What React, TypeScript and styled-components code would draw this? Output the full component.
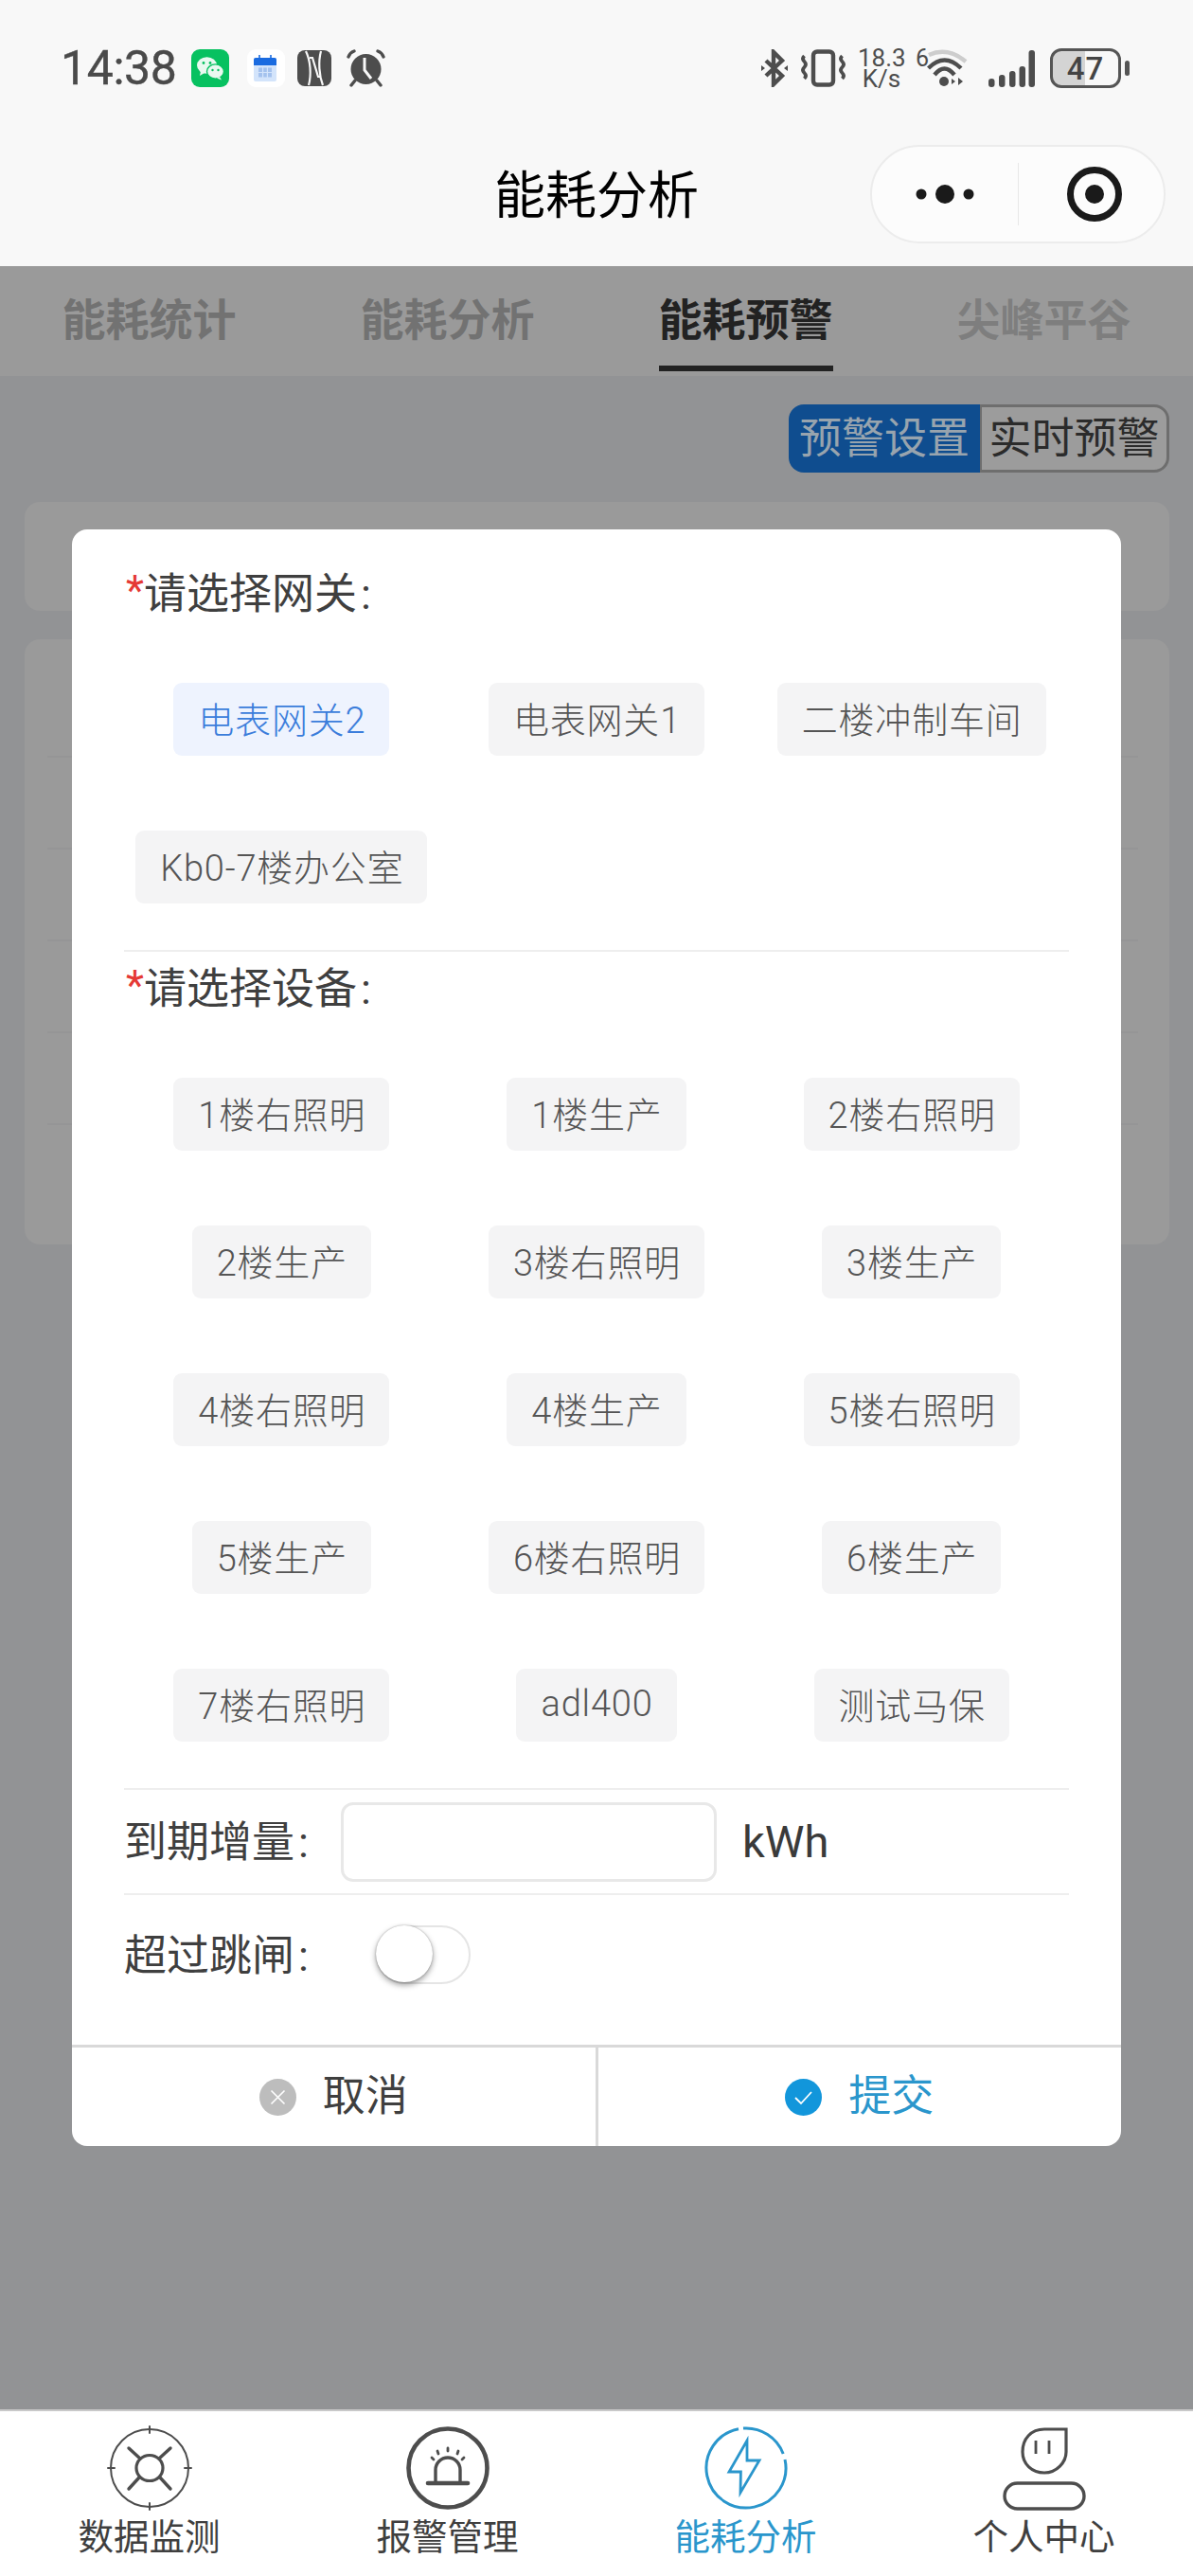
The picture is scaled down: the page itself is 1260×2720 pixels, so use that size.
import React from 'react';
import styled, { createGlobalStyle } from 'styled-components';

const GlobalStyle = createGlobalStyle`
  html, body {
    margin: 0;
    padding: 0;
    background: #929395;
    font-family: Roboto, "Noto Sans CJK SC", sans-serif;
  }
  * { box-sizing: border-box; }
`;

const Page = styled.div`
  position: relative;
  width: 1260px;
  height: 2720px;
  display: flex;
  flex-direction: column;
  overflow: hidden;
`;

// Header
const Header = styled.header`
  background: #f8f8f8;
  height: 281px;
  flex: none;
`;

const StatusBar = styled.div`
  height: 144px;
  display: flex;
  align-items: center;
  justify-content: space-between;
  padding: 0 68px 0 64px;
  color: #4d4d4d;
`;

const StatusGroup = styled.div`
  display: flex;
  align-items: center;
`;

const Clock = styled.span`
  font-size: 50px;
  line-height: 50px;
  letter-spacing: -0.4px;
  color: #4a4a4a;
  -webkit-text-stroke: 0.4px #4a4a4a;
`;

const StatusIcon = styled.svg<{ $gap?: number }>`
  display: block;
  flex: none;
  margin-left: ${props => props.$gap || 0}px;
`;

const Speed = styled.div`
  margin-left: 13px;
  width: 50px;
  font-size: 26px;
  line-height: 22px;
  text-align: center;
  color: #4d4d4d;
`;

const WifiGen = styled.span`
  margin: 0 0 20px 11px;
  font-size: 25px;
  line-height: 22px;
  width: 12px;
  color: #4d4d4d;
`;

const Battery = styled.div`
  position: relative;
  margin-left: 16px;
  width: 75px;
  height: 42px;
  border: 3px solid #555;
  border-radius: 12px;
  background: linear-gradient(90deg, #d4d4d4 0 50%, transparent 50%);
  display: flex;
  align-items: center;
  justify-content: center;
  font-size: 33px;
  font-weight: 500;
  letter-spacing: 1px;
  color: #444;

  &::after {
    content: '';
    position: absolute;
    right: -12px;
    top: 10px;
    width: 5px;
    height: 16px;
    border-radius: 3px;
    background: #555;
  }
`;

const NavBar = styled.div`
  height: 137px;
  padding: 0 29px 15px;
  display: grid;
  grid-template-columns: 1fr auto 1fr;
  align-items: center;
`;

const NavTitle = styled.div`
  grid-column: 2;
  padding-top: 6px;
  font-size: 54px;
  line-height: 64px;
  color: #000;
`;

const Capsule = styled.div`
  justify-self: end;
  width: 312px;
  height: 104px;
  border: 2px solid #ececec;
  border-radius: 52px;
  background: #fcfcfc;
  display: flex;
  align-items: center;
`;

const CapsuleMenu = styled.div`
  flex: 0 0 155px;
  display: flex;
  align-items: center;
  justify-content: center;
  height: 66px;
  border-right: 1px solid #e8e8e8;
`;

const CapsuleClose = styled.div`
  flex: 1;
  padding-left: 7px;
  display: flex;
  align-items: center;
  justify-content: center;
  height: 66px;
`;

// Tabs
const TabBar = styled.nav`
  flex: none;
  height: 116px;
  background: #9a9a9a;
  display: grid;
  grid-template-columns: repeat(4, 1fr);
  justify-items: center;
`;

const Tab = styled.div<{ $active?: boolean; $faint?: boolean }>`
  height: 111px;
  padding-top: 27px;
  font-size: 46px;
  line-height: 60px;
  font-weight: 700;
  color: ${props => (props.$active ? '#222' : props.$faint ? '#7e7e7e' : '#727272')};
  border-bottom: 6px solid ${props => (props.$active ? '#222' : 'transparent')};
`;

// Dimmed page behind the popup
const Main = styled.main`
  flex: 1;
  padding: 30px 25px 0 26px;
  background: #929395;
`;

const SegmentRow = styled.div`
  display: flex;
  justify-content: flex-end;
`;

const Segment = styled.div<{ $active?: boolean }>`
  height: 72px;
  padding-bottom: 7px;
  display: flex;
  align-items: center;
  justify-content: center;
  font-size: 45px;
  ${props =>
    props.$active
      ? `
    width: 202px;
    background: #0f4d8f;
    color: #98a4ae;
    border-radius: 16px 0 0 16px;
  `
      : `
    width: 200px;
    background: #9c9c9c;
    color: #2b2b2b;
    border: 3px solid #6e6e6e;
    border-left-width: 2px;
    border-radius: 0 16px 16px 0;
  `}
`;

const GhostCard = styled.div`
  background: #9a9a9a;
  border-radius: 16px;
  height: 115px;
  margin-top: 31px;
`;

const GhostList = styled.div`
  background: #9a9a9a;
  border-radius: 16px;
  margin-top: 30px;
  padding: 0 33px 0 24px;
  height: 639px;
  display: flex;
  flex-direction: column;
`;

const GhostRow = styled.div<{ $first?: boolean }>`
  height: ${props => (props.$first ? 125 : 97)}px;
  flex: none;
  border-bottom: 2px solid #959596;
`;

// Popup
const Modal = styled.section`
  position: absolute;
  left: 76px;
  top: 559px;
  width: 1108px;
  height: 1707px;
  background: #fff;
  border-radius: 16px;
  overflow: hidden;
  display: flex;
  flex-direction: column;
`;

const ModalBody = styled.div`
  flex: 1;
  padding: 35px 55px 0;
`;

const FieldLabel = styled.div<{ $next?: boolean }>`
  margin-top: ${props => (props.$next ? 6 : 0)}px;
  height: 60px;
  padding-top: 7px;
  font-size: 45px;
  line-height: 53px;
  color: #3f3f3f;
  display: flex;
  align-items: center;
`;

const Required = styled.span`
  width: 21px;
  padding-left: 2px;
  margin-bottom: 7px;
  color: #e53935;
  font-size: 44px;
`;

const Colon = styled.span`
  margin-left: 4px;
`;

const ChipGrid = styled.div`
  margin-top: 67px;
  padding-bottom: 49px;
  display: grid;
  grid-template-columns: repeat(3, 1fr);
  justify-items: center;
  row-gap: 79px;
  border-bottom: 2px solid #eeeeee;
`;

const Chip = styled.div<{ $selected?: boolean }>`
  height: 77px;
  padding: 0 25px 4px 26px;
  border-radius: 9px;
  display: flex;
  align-items: center;
  font-size: 38px;
  font-weight: 300;
  letter-spacing: 0.8px;
  white-space: nowrap;
  background: ${props => (props.$selected ? '#eef3fe' : '#f4f4f5')};
  color: ${props => (props.$selected ? '#3b7ddb' : '#555')};
`;

const FormRow = styled.div<{ $height: number; $divider?: boolean }>`
  height: ${props => props.$height}px;
  display: flex;
  align-items: center;
  font-size: 45px;
  color: #3f3f3f;
  border-bottom: ${props => (props.$divider ? '2px solid #eeeeee' : 'none')};
`;

const RowLabel = styled.span<{ $width: number }>`
  width: ${props => props.$width}px;
  padding-bottom: 6px;
  flex: none;
`;

const AmountInput = styled.input`
  width: 397px;
  height: 84px;
  border: 3px solid #e8e8e8;
  border-radius: 13px;
  background: #fff;
  outline: none;
  margin-right: 27px;
`;

const Unit = styled.span`
  font-size: 47px;
  color: #3a3a3a;
`;

const Toggle = styled.div`
  position: relative;
  width: 100px;
  height: 62px;
  border: 2px solid #e5e5e5;
  border-radius: 31px;
  background: #fff;
`;

const ToggleThumb = styled.span`
  position: absolute;
  left: -2px;
  top: -2px;
  width: 60px;
  height: 60px;
  border-radius: 50%;
  background: #fff;
  box-shadow: 0 3px 6px rgba(0, 0, 0, 0.38), 0 0 2px rgba(0, 0, 0, 0.3);
`;

const ModalFooter = styled.div`
  flex: none;
  height: 107px;
  border-top: 3px solid #d9d9d9;
  display: flex;
`;

const FooterButton = styled.div<{ $primary?: boolean }>`
  flex: 1;
  display: flex;
  align-items: center;
  justify-content: center;
  gap: 28px;
  font-size: 45px;
  color: ${props => (props.$primary ? '#2a96cc' : '#3f3f3f')};

  & + & {
    border-left: 3px solid #d9d9d9;
  }
`;

const FooterText = styled.span`
  padding-bottom: 9px;
`;

// Bottom tab bar
const BottomBar = styled.footer`
  flex: none;
  height: 176px;
  background: #fff;
  border-top: 2px solid #c9c9c9;
  display: grid;
  grid-template-columns: repeat(4, 1fr);
`;

const BottomItem = styled.div<{ $active?: boolean }>`
  padding-top: 16px;
  display: flex;
  flex-direction: column;
  align-items: center;
  font-size: 37.500px;
  line-height: 58px;
  color: ${props => (props.$active ? '#2a96cc' : '#3f3f3f')};
`;

const BottomIcon = styled.svg`
  display: block;
  width: 88px;
  height: 88px;
  overflow: visible;
  flex: none;
`;

const gateways = ['电表网关2', '电表网关1', '二楼冲制车间', 'Kb0-7楼办公室'];
const devices = [
  '1楼右照明', '1楼生产', '2楼右照明',
  '2楼生产', '3楼右照明', '3楼生产',
  '4楼右照明', '4楼生产', '5楼右照明',
  '5楼生产', '6楼右照明', '6楼生产',
  '7楼右照明', 'adl400', '测试马保',
];

const GRAY = '#4d4d4d';
const BLUE = '#2a96cc';

const StatusLeft = () => (
  <StatusGroup>
    <Clock>14:38</Clock>
    <StatusIcon $gap={15} width="40" height="40" viewBox="0 0 40 40">
      <rect width="40" height="40" rx="9" fill="#07c160" />
      <ellipse cx="16.5" cy="17" rx="10.5" ry="8.8" fill="#e9f9f0" />
      <path d="M10 23l-1 5 5-3z" fill="#e9f9f0" />
      <ellipse cx="25.5" cy="23.5" rx="9" ry="7.6" fill="#e9f9f0" stroke="#07c160" strokeWidth="1.4" />
      <path d="M30 29l2 3.5-5-2z" fill="#e9f9f0" />
      <circle cx="13" cy="14.5" r="1.4" fill="#07c160" />
      <circle cx="20" cy="14.5" r="1.4" fill="#07c160" />
      <circle cx="22.5" cy="22" r="1.2" fill="#07c160" />
      <circle cx="28.5" cy="22" r="1.2" fill="#07c160" />
    </StatusIcon>
    <StatusIcon $gap={19} width="40" height="40" viewBox="0 0 40 40">
      <rect width="40" height="40" rx="9" fill="#fff" />
      <rect x="7" y="9" width="24" height="25" rx="2" fill="#d3e4fb" />
      <path d="M7 11a2 2 0 0 1 2-2h20a2 2 0 0 1 2 2v6H7z" fill="#1a6be0" />
      <path d="M13 6v5M25 6v5" stroke="#1a6be0" strokeWidth="1.6" />
      <path d="M12 19.500h14v10H12z" fill="#a4c2ee" />
      <path d="M16.600 19v11M21.400 19v11M12 24.500h14" stroke="#d3e4fb" strokeWidth="1.2" />
    </StatusIcon>
    <StatusIcon $gap={13} width="36" height="38" viewBox="0 0 36 38">
      <rect width="36" height="38" rx="8" fill={GRAY} />
      <path d="M9 1c5 10 6 25 3 36" fill="none" stroke="#f8f8f8" strokeWidth="2.200" />
      <path d="M13 8h3l6 20h3" fill="none" stroke="#f8f8f8" strokeWidth="2.200" />
      <path d="M27 37c-4-10-5-25-2-36" fill="none" stroke="#f8f8f8" strokeWidth="2.200" />
    </StatusIcon>
    <StatusIcon $gap={16} width="41" height="40" viewBox="0 0 41 40">
      <circle cx="20.500" cy="21" r="16" fill={GRAY} />
      <path d="M19 9v13l7 9" fill="none" stroke="#f8f8f8" strokeWidth="3" />
      <path d="M2 8c1-3 3-5 6-6M39 8c-1-3-3-5-6-6M5 38l4-5M36 38l-4-5" fill="none" stroke={GRAY} strokeWidth="3.4" strokeLinecap="round" />
    </StatusIcon>
  </StatusGroup>
);

const StatusRight = () => (
  <StatusGroup>
    <StatusIcon width="28" height="40" viewBox="0 0 28 40">
      <path d="M5 12l17 16-9 9V3l9 9L5 28" fill="none" stroke={GRAY} strokeWidth="4.4" />
      <path d="M0 17l4 3-4 3zM28 17l-4 3 4 3z" fill={GRAY} />
    </StatusIcon>
    <StatusIcon $gap={14} width="47" height="40" viewBox="0 0 47 40">
      <rect x="13" y="2.500" width="21" height="35" rx="4" fill="none" stroke={GRAY} strokeWidth="4.400" />
      <path d="M3.500 7q-3 3 0 6t0 6 0 6 0 6M43.500 7q-3 3 0 6t0 6 0 6 0 6" fill="none" stroke={GRAY} strokeWidth="3.800" />
    </StatusIcon>
    <Speed>
      18.3
      <br />
      K/s
    </Speed>
    <WifiGen>6</WifiGen>
    <StatusIcon width="44" height="40" viewBox="0 0 44 40">
      <path d="M2 6Q22-3 41 13" fill="none" stroke="#cdcdcd" strokeWidth="4.400" />
      <path d="M1.500 20Q18.500 3 36 20M8 27q10.500-13 21 0" fill="none" stroke={GRAY} strokeWidth="4.400" />
      <circle cx="18" cy="34" r="5" fill={GRAY} />
      <path d="M30 34l-4 3v-6zM33 30l5 4-5 4z" fill={GRAY} />
    </StatusIcon>
    <StatusIcon $gap={21} width="49" height="39" viewBox="0 0 49 39">
      <rect x="0" y="30" width="6.500" height="9" rx="3" fill={GRAY} />
      <rect x="11" y="26" width="6.500" height="13" rx="3" fill={GRAY} />
      <rect x="22" y="22" width="6.500" height="17" rx="3" fill={GRAY} />
      <rect x="32.500" y="17" width="6.500" height="22" rx="3" fill={GRAY} />
      <rect x="42.500" y="0" width="6.500" height="39" rx="3" fill={GRAY} />
    </StatusIcon>
    <Battery>47</Battery>
    <StatusIcon width="8" height="1" viewBox="0 0 8 1" />
  </StatusGroup>
);

const MonitorIcon = () => (
  <BottomIcon viewBox="0 0 88 88" fill="none" stroke="#4d4d4d" strokeLinecap="round">
    <ellipse cx="44" cy="44" rx="41" ry="41" strokeWidth="2" />
    <path d="M44 0v7M44 81v7M0 44h7M81 44h7" strokeWidth="2" />
    <ellipse cx="44" cy="44" rx="14" ry="13.500" strokeWidth="3.200" />
    <path d="M22 23l12 11M66 23L54 34M22 66l11-12M66 66L55 54" strokeWidth="3.400" />
  </BottomIcon>
);

const AlarmIcon = () => (
  <BottomIcon viewBox="0 0 88 88" fill="none" stroke="#4d4d4d" strokeLinecap="round">
    <circle cx="44" cy="44" r="41.500" strokeWidth="4.600" />
    <path d="M31 60V46a13 13 0 0 1 26 0v14" strokeWidth="3.400" />
    <path d="M23 60h42" strokeWidth="4.600" />
    <path d="M44 23v3M33 26l1 3M55 26l-1 3M27 33l2 2M61 33l-2 2" strokeWidth="2.800" />
  </BottomIcon>
);

const EnergyIcon = () => (
  <BottomIcon viewBox="0 0 88 88" fill="none" stroke={BLUE}>
    <path d="M41 2.100A42 42 0 0 1 83.200 29M85 35A42 42 0 1 1 36 2.800" strokeWidth="3" />
    <path d="M45 15L26 48h12.400L38 70l20-34H45z" strokeWidth="2.800" />
  </BottomIcon>
);

const PersonIcon = () => (
  <BottomIcon viewBox="0 0 88 88" fill="none" stroke="#4d4d4d">
    <path d="M67 3H44C30 3 21 13 21 27c0 13 10 22 23 22s23-11 23-22z" strokeWidth="3.200" />
    <path d="M35 15v14M49 15v14" strokeWidth="2.800" />
    <rect x="2" y="60" width="84" height="27" rx="13.500" strokeWidth="3.400" />
  </BottomIcon>
);

export default function App() {
  return (
    <Page>
      <GlobalStyle />
      <Header>
        <StatusBar>
          <StatusLeft />
          <StatusRight />
        </StatusBar>
        <NavBar>
          <NavTitle>能耗分析</NavTitle>
          <Capsule>
            <CapsuleMenu>
              <svg width="62" height="22" viewBox="0 0 62 22" fill="#1a1a1a">
                <circle cx="6" cy="11" r="5.500" />
                <circle cx="31" cy="11" r="10" />
                <circle cx="56" cy="11" r="5.500" />
              </svg>
            </CapsuleMenu>
            <CapsuleClose>
              <svg width="60" height="60" viewBox="0 0 60 60">
                <circle cx="30" cy="30" r="25.500" fill="none" stroke="#1a1a1a" strokeWidth="7" />
                <circle cx="30" cy="30" r="10" fill="#1a1a1a" />
              </svg>
            </CapsuleClose>
          </Capsule>
        </NavBar>
      </Header>

      <TabBar>
        <Tab>能耗统计</Tab>
        <Tab>能耗分析</Tab>
        <Tab $active>能耗预警</Tab>
        <Tab $faint>尖峰平谷</Tab>
      </TabBar>

      <Main>
        <SegmentRow>
          <Segment $active>预警设置</Segment>
          <Segment>实时预警</Segment>
        </SegmentRow>
        <GhostCard />
        <GhostList>
          <GhostRow $first />
          <GhostRow />
          <GhostRow />
          <GhostRow />
          <GhostRow />
        </GhostList>
      </Main>

      <BottomBar>
        <BottomItem>
          <MonitorIcon />
          数据监测
        </BottomItem>
        <BottomItem>
          <AlarmIcon />
          报警管理
        </BottomItem>
        <BottomItem $active>
          <EnergyIcon />
          能耗分析
        </BottomItem>
        <BottomItem>
          <PersonIcon />
          个人中心
        </BottomItem>
      </BottomBar>

      <Modal>
        <ModalBody>
          <FieldLabel>
            <Required>*</Required>请选择网关<Colon>:</Colon>
          </FieldLabel>
          <ChipGrid>
            {gateways.map((name, i) => (
              <Chip key={name} $selected={i === 0}>{name}</Chip>
            ))}
          </ChipGrid>
          <FieldLabel $next>
            <Required>*</Required>请选择设备<Colon>:</Colon>
          </FieldLabel>
          <ChipGrid>
            {devices.map(name => (
              <Chip key={name}>{name}</Chip>
            ))}
          </ChipGrid>
          <FormRow $height={111} $divider>
            <RowLabel $width={229}>到期增量<Colon>:</Colon></RowLabel>
            <AmountInput />
            <Unit>kWh</Unit>
          </FormRow>
          <FormRow $height={126}>
            <RowLabel $width={266}>超过跳闸<Colon>:</Colon></RowLabel>
            <Toggle>
              <ToggleThumb />
            </Toggle>
          </FormRow>
        </ModalBody>
        <ModalFooter>
          <FooterButton>
            <svg width="39" height="39" viewBox="0 0 39 39">
              <circle cx="19.500" cy="19.500" r="19.500" fill="#bdbdbd" />
              <path d="M12.500 12.500l14 14M26.500 12.500l-14 14" stroke="#fff" strokeWidth="1.600" />
            </svg>
            <FooterText>取消</FooterText>
          </FooterButton>
          <FooterButton $primary>
            <svg width="39" height="39" viewBox="0 0 39 39">
              <circle cx="19.500" cy="19.500" r="19.500" fill="#1296db" />
              <path d="M11 20l6 6 11-12" fill="none" stroke="#fff" strokeWidth="1.800" />
            </svg>
            <FooterText>提交</FooterText>
          </FooterButton>
        </ModalFooter>
      </Modal>
    </Page>
  );
}
